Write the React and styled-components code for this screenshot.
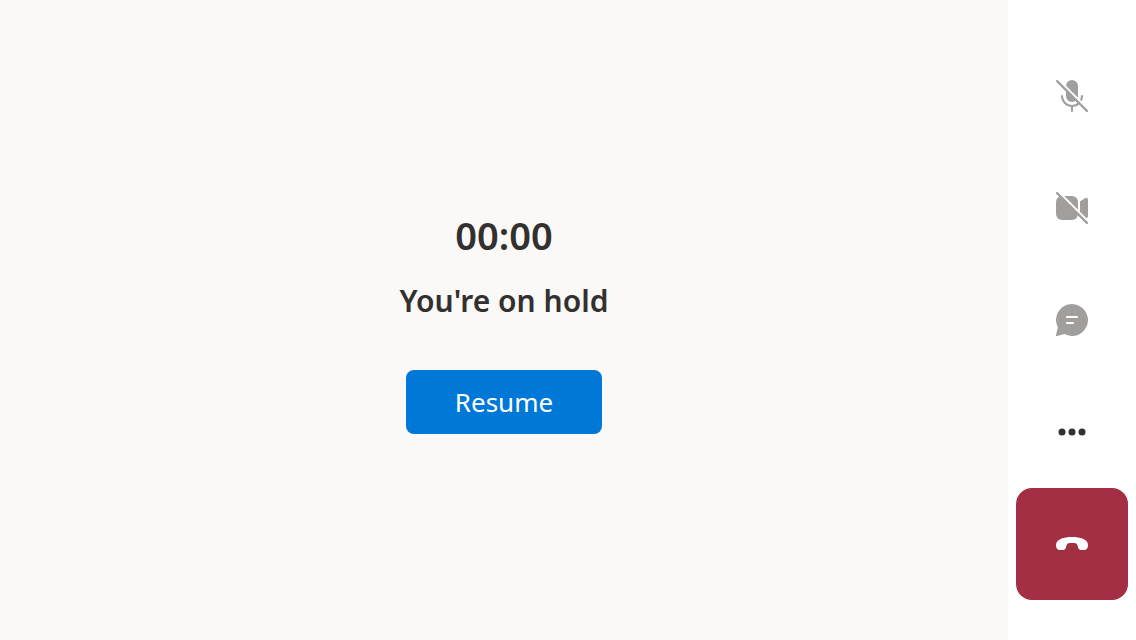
import React from "react";
import styled, { createGlobalStyle } from "styled-components";

const GlobalStyle = createGlobalStyle`
  *, *::before, *::after { box-sizing: border-box; }
  body {
    margin: 0;
    background: #ffffff;
    color: #323130;
    font-family: "Segoe UI", "Noto Sans", sans-serif;
  }
`;

const Layout = styled.div`
  display: flex;
  min-height: 100vh;
`;

const Stage = styled.main`
  flex: 1;
  display: flex;
  flex-direction: column;
  align-items: center;
  justify-content: center;
  background: #faf9f8;
`;

const Timer = styled.div`
  font-size: 38px;
  font-weight: 600;
  line-height: 58px;
`;

const Status = styled.h1`
  margin: 14px 0 46px;
  font-size: 30px;
  font-weight: 600;
  line-height: 46px;
`;

const ResumeButton = styled.button`
  width: 196px;
  height: 64px;
  padding: 0;
  border: 0;
  border-radius: 8px;
  background: #0078d7;
  color: #ffffff;
  font-family: inherit;
  font-size: 26px;
  line-height: 64px;
  cursor: pointer;
`;

const Controls = styled.nav`
  display: flex;
  flex-direction: column;
  align-items: center;
  justify-content: center;
  width: 128px;
  background: #ffffff;
`;

const ControlButton = styled.button`
  display: flex;
  align-items: center;
  justify-content: center;
  width: 112px;
  height: 112px;
  padding: 0;
  border: 0;
  border-radius: 16px;
  background: ${(p) => (p.$danger ? "#a42e43" : "transparent")};
  color: ${(p) => (p.$danger ? "#ffffff" : "#323130")};
  cursor: pointer;

  &:disabled {
    color: #a19f9d;
    cursor: default;
  }
`;

const Icon = styled.svg`
  display: block;
  width: 32px;
  height: 32px;
  fill: currentColor;
`;

const Slash = () => (
  <>
    <path d="M2.600 0 32 29.400" stroke="#ffffff" strokeWidth="2.400" fill="none" />
    <path d="M1.100 1.100 30.900 30.900" stroke="currentColor" strokeWidth="2.200" strokeLinecap="round" />
  </>
);

const MicOffIcon = () => (
  <Icon viewBox="0 0 32 32" aria-hidden="true">
    <path d="M10 6a6 6 0 0 1 12 0v10a6 6 0 0 1-12 0Z" />
    <path
      d="M6 16a10 10 0 0 0 20 0M16 26v5"
      fill="none"
      stroke="currentColor"
      strokeWidth="2"
      strokeLinecap="round"
    />
    <Slash />
  </Icon>
);

const VideoOffIcon = () => (
  <Icon viewBox="0 0 32 32" aria-hidden="true">
    <path d="M6 4h10a6 6 0 0 1 6 6v12a6 6 0 0 1-6 6H6a6 6 0 0 1-6-6V10a6 6 0 0 1 6-6Z" />
    <path d="m24 9.500 4.900-3.300A2 2 0 0 1 32 7.900v16.200a2 2 0 0 1-3.100 1.700L24 22.500Z" />
    <Slash />
  </Icon>
);

const ChatIcon = () => (
  <Icon viewBox="0 0 32 32" aria-hidden="true">
    <path d="M16 0a16 16 0 1 1-7.600 30.100L1.200 32A1 1 0 0 1 0 30.800l1.900-7.200A16 16 0 0 1 16 0Z" />
    <path d="M11 13h10M11 19h6" stroke="#ffffff" strokeWidth="2" strokeLinecap="round" />
  </Icon>
);

const MoreIcon = () => (
  <Icon viewBox="0 0 32 32" aria-hidden="true">
    <circle cx="6" cy="16" r="3.500" />
    <circle cx="16" cy="16" r="3.500" />
    <circle cx="26" cy="16" r="3.500" />
  </Icon>
);

const HangUpIcon = () => (
  <Icon viewBox="0 0 32 32" aria-hidden="true">
    <path d="M16 9C8 9 0 11.400 0 16.800c0 3.800 1.600 5.200 3.900 5.200h2.700c1.500 0 2.700-.9 3.200-2.300l.9-2.700c.3-.9.900-1.500 1.800-1.700 1.100-.3 2.300-.4 3.500-.4s2.400.1 3.500.4c.9.200 1.500.8 1.800 1.700l.9 2.700c.5 1.400 1.700 2.300 3.200 2.300h2.700c2.300 0 3.900-1.400 3.900-5.200C32 11.400 24 9 16 9Z" />
  </Icon>
);

export default function App() {
  return (
    <>
      <GlobalStyle />
      <Layout>
        <Stage>
          <Timer role="timer">00:00</Timer>
          <Status>You're on hold</Status>
          <ResumeButton type="button">Resume</ResumeButton>
        </Stage>
        <Controls aria-label="Call controls">
          <ControlButton type="button" disabled aria-label="Microphone">
            <MicOffIcon />
          </ControlButton>
          <ControlButton type="button" disabled aria-label="Camera">
            <VideoOffIcon />
          </ControlButton>
          <ControlButton type="button" disabled aria-label="Chat">
            <ChatIcon />
          </ControlButton>
          <ControlButton type="button" aria-label="More options">
            <MoreIcon />
          </ControlButton>
          <ControlButton type="button" $danger aria-label="Leave call">
            <HangUpIcon />
          </ControlButton>
        </Controls>
      </Layout>
    </>
  );
}
